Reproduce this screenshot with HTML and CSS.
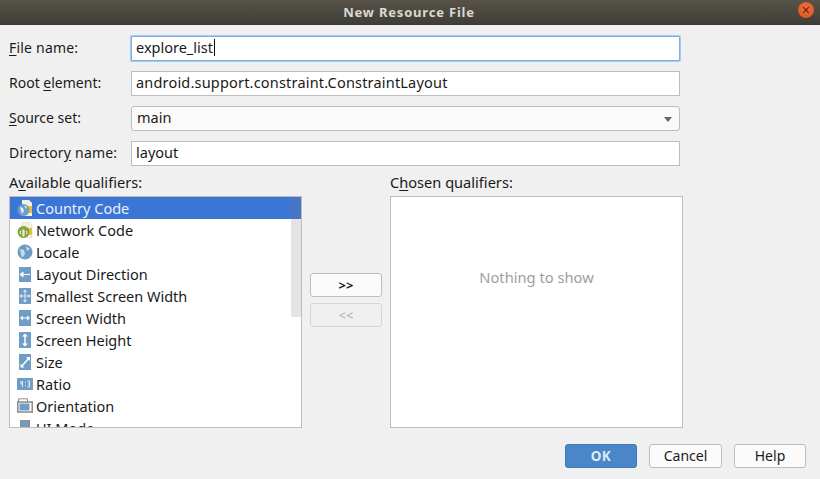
FILE: index.html
```html
<!DOCTYPE html>
<html lang="en">
<head>
<meta charset="utf-8">
<title>New Resource File</title>
<link rel="stylesheet" href="styles.css">
</head>
<body>
<div class="dialog">
  <header class="titlebar">
    <span class="title">New Resource File</span>
    <span class="close"><svg width="8" height="8" viewBox="0 0 8 8"><path d="M1.2 1.2 6.8 6.8M6.8 1.2 1.2 6.8" stroke="#5a2410" stroke-width="1.2" fill="none"/></svg></span>
  </header>
  <main class="content">
    <div class="fields">
      <label class="label roomy"><u>F</u>ile name:</label>
      <div class="input focused"><span>explore_list</span><i class="caret"></i></div>
      <label class="label">Root <u>e</u>lement:</label>
      <div class="input"><span class="wide">android.support.constraint.ConstraintLayout</span></div>
      <label class="label"><u>S</u>ource set:</label>
      <div class="input select"><span>main</span><i class="arrow"></i></div>
      <label class="label roomy">Director<u>y</u> name:</label>
      <div class="input"><span>layout</span></div>
    </div>
    <div class="qualifiers">
      <div class="column">
        <div class="heading">A<u>v</u>ailable qualifiers:</div>
        <div class="list">
          <div class="row selected"><svg class="icon" viewBox="0 0 16 16"><path d="M5 0h7l3 3v13H5z" fill="#f4f1e6"/><path d="M11 6h4v7h-4z" fill="#e8c23c"/><circle cx="6.500" cy="10" r="6" fill="#6d9cc6"/><path d="M3 7l3 1 1 3-2 3-1-3zM7 5l3 2-1 2z" fill="#e4edf5"/></svg><span>Country Code</span></div>
          <div class="row"><svg class="icon" viewBox="0 0 16 16"><path d="M5 0h7l3 3v13H5z" fill="#f1efe8" stroke="#dcd9cf" stroke-width=".6"/><path d="M11 6h4v7h-4z" fill="#e8c23c"/><circle cx="6.500" cy="10" r="6" fill="#87a53c"/><path d="M6 8h1v6H6zM3.600 9a3 3 0 0 0 0 3M9.400 9a3 3 0 0 1 0 3" stroke="#fff" fill="none"/></svg><span>Network Code</span></div>
          <div class="row"><svg class="icon" viewBox="0 0 16 16"><circle cx="8" cy="8" r="7.500" fill="#6d9cc6"/><path d="M3 5l4 1 1 4-3 4-1-4zM9 2l4 3-3 2z" fill="#c9dbea"/></svg><span>Locale</span></div>
          <div class="row"><svg class="icon" viewBox="0 0 16 16"><rect x="2" y="1" width="12" height="15" fill="#6f9dc5"/><path d="M3 8.500h10M3 8.500l3-2.500v5z" stroke="#fff" fill="#fff"/></svg><span>Layout Direction</span></div>
          <div class="row"><svg class="icon" viewBox="0 0 16 16"><rect x="2" y="0" width="12" height="16" fill="#6f9dc5"/><path d="M3 8h10M8 2.500v11" stroke="#dfe9f2"/><path d="M8 1.500 6 4h4zM8 14.500 6 12h4zM2.500 8 5 6v4zM13.500 8 11 6v4z" fill="#dfe9f2"/></svg><span>Smallest Screen Width</span></div>
          <div class="row"><svg class="icon" viewBox="0 0 16 16"><rect x="2" y="0" width="12" height="16" fill="#6f9dc5"/><path d="M4 8h8" stroke="#fff"/><path d="M3 8 6 5.500v5zM13 8 10 5.500v5z" fill="#fff"/></svg><span>Screen Width</span></div>
          <div class="row"><svg class="icon" viewBox="0 0 16 16"><rect x="2" y="0" width="12" height="16" fill="#6f9dc5"/><path d="M8 3v10" stroke="#fff" stroke-width="1.500"/><path d="M8 1.500 5 4.500h6zM8 14.500 5 11.500h6z" fill="#fff"/></svg><span>Screen Height</span></div>
          <div class="row"><svg class="icon" viewBox="0 0 16 16"><rect x="2" y="0" width="12" height="16" fill="#6f9dc5"/><path d="M5 12 12 4" stroke="#fff" stroke-width="1.500"/><path d="M13 3H9l4 4zM3.500 13.500h4l-4-4z" fill="#fff"/></svg><span>Size</span></div>
          <div class="row"><svg class="icon" viewBox="0 0 16 16"><rect x="0" y="2" width="16" height="12" fill="#6f9dc5"/><path d="M4 5v3h2M5.500 5v6M8.500 6v.8M8.500 9v.8M10.500 5h2v6h-2M10.500 8h2" stroke="#e6eef5" fill="none"/></svg><span>Ratio</span></div>
          <div class="row"><svg class="icon" viewBox="0 0 16 16"><path d="M1.500 4V.8h9V4" stroke="#8e8e8e" fill="#fff"/><rect x=".8" y="4" width="14.400" height="10" fill="#fff" stroke="#8e8e8e" stroke-width="1.600"/><rect x="2.500" y="5.500" width="10" height="7" fill="#6f9dc5"/></svg><span>Orientation</span></div>
          <div class="row"><svg class="icon" viewBox="0 0 16 16"><rect x="3.800" y=".8" width="8.400" height="14" fill="#6f9dc5" stroke="#8e8e8e" stroke-width="1.600"/></svg><span>UI Mode</span></div>
        </div>
        <div class="scrollbar"></div>
      </div>
      <div class="mover">
        <button class="btn small" type="button">&gt;&gt;</button>
        <button class="btn small disabled" type="button">&lt;&lt;</button>
      </div>
      <div class="column">
        <div class="heading">C<u>h</u>osen qualifiers:</div>
        <div class="list empty">Nothing to show</div>
      </div>
    </div>
  </main>
  <footer class="footer">
    <button class="btn primary" type="button">OK</button>
    <button class="btn cancel" type="button">Cancel</button>
    <button class="btn" type="button">Help</button>
  </footer>
</div>
</body>
</html>
```
FILE: styles.css
```css
* { box-sizing: border-box; }
html, body { margin: 0; height: 100%; }
body { font-family: "Noto Sans", "Open Sans", sans-serif; font-size: 14px; color: #1a1a1a; background: #f0f0f0; overflow: hidden; }
.dialog { width: 820px; height: 479px; display: flex; flex-direction: column; background: #f0f0f0; }
.titlebar { height: 25px; flex: none; display: flex; align-items: center; justify-content: center; position: relative; background: linear-gradient(#575349, #3e3c36); }
.title { color: #dad8d2; font-weight: 700; font-size: 13px; letter-spacing: .8px; padding: 0 2px 2px 0; }
.close { position: absolute; right: 6px; top: 2px; width: 16px; height: 16px; border-radius: 50%; background: radial-gradient(circle at 50% 40%, #f0703f, #d9501f); display: flex; align-items: center; justify-content: center; }
.content { flex: 1; padding: 11px 0 0 9px; display: flex; flex-direction: column; }
.fields { display: grid; grid-template-columns: 122px 549px; grid-auto-rows: 25px; row-gap: 10px; align-items: center; }
.label { line-height: 22px; padding-bottom: 2px; }
.label.roomy { letter-spacing: .2px; }
.label u, .heading u { text-underline-offset: 2px; }
.input { height: 25px; background: #fff; border: 1px solid #bdbdbd; padding: 0 0 2px 4px; display: flex; align-items: center; line-height: 21px; position: relative; font-size: 14.500px; }
.input.focused { border: 1px solid #7eaee6; box-shadow: 0 0 0 1px #a9c8ee; border-radius: 1px; }
.input.select { background: #fafafa; border-radius: 3px; padding-left: 5px; }
.wide { letter-spacing: .19px; }
.caret { width: 1px; height: 17px; background: #111; margin-left: 1px; }
.arrow { position: absolute; right: 7px; top: 10px; width: 0; height: 0; border-left: 4.500px solid transparent; border-right: 4.500px solid transparent; border-top: 5px solid #666; }
.qualifiers { display: grid; grid-template-columns: 293px 88px 293px; margin-top: 5px; }
.column { position: relative; display: flex; flex-direction: column; }
.heading { height: 25px; line-height: 22px; font-size: 14.600px; }
.list { width: 293px; height: 232px; background: #fff; border: 1px solid #bdbdbd; overflow: hidden; font-size: 14.500px; }
.row { height: 22px; display: flex; align-items: center; padding-left: 7px; color: #1a1a1a; flex: none; }
.row.selected { background: #3b75d6; color: #e8f0fa; }
.row span { margin-left: 3px; line-height: 22px; }
.icon { width: 16px; height: 16px; flex: none; }
.scrollbar { position: absolute; left: 282px; top: 26px; width: 10px; height: 120px; background: rgba(120, 120, 120, .2); }
.empty { display: flex; align-items: center; justify-content: center; color: #9e9e9e; padding-bottom: 70px; font-size: 14.700px; }
.mover { display: flex; flex-direction: column; align-items: center; gap: 6px; padding-top: 102px; }
.btn { font: inherit; color: #1a1a1a; width: 72px; height: 24px; padding: 0; background: #fbfbfb; border: 1px solid #bdbdbd; border-radius: 3px; line-height: 20px; }
.btn.cancel { width: 73px; }
.btn.small { font-size: 13px; font-weight: 700; }
.btn.disabled { background: #f0f0f0; border-color: #d6d6d6; color: #acacac; font-weight: 400; }
.btn.primary { background: #4a86c8; border-color: #3f79b8; color: #dfe9f3; font-weight: 700; font-size: 13.500px; letter-spacing: .4px; }
.footer { flex: none; display: flex; gap: 12px; padding: 0 14px 11px 0; justify-content: flex-end; }
```
